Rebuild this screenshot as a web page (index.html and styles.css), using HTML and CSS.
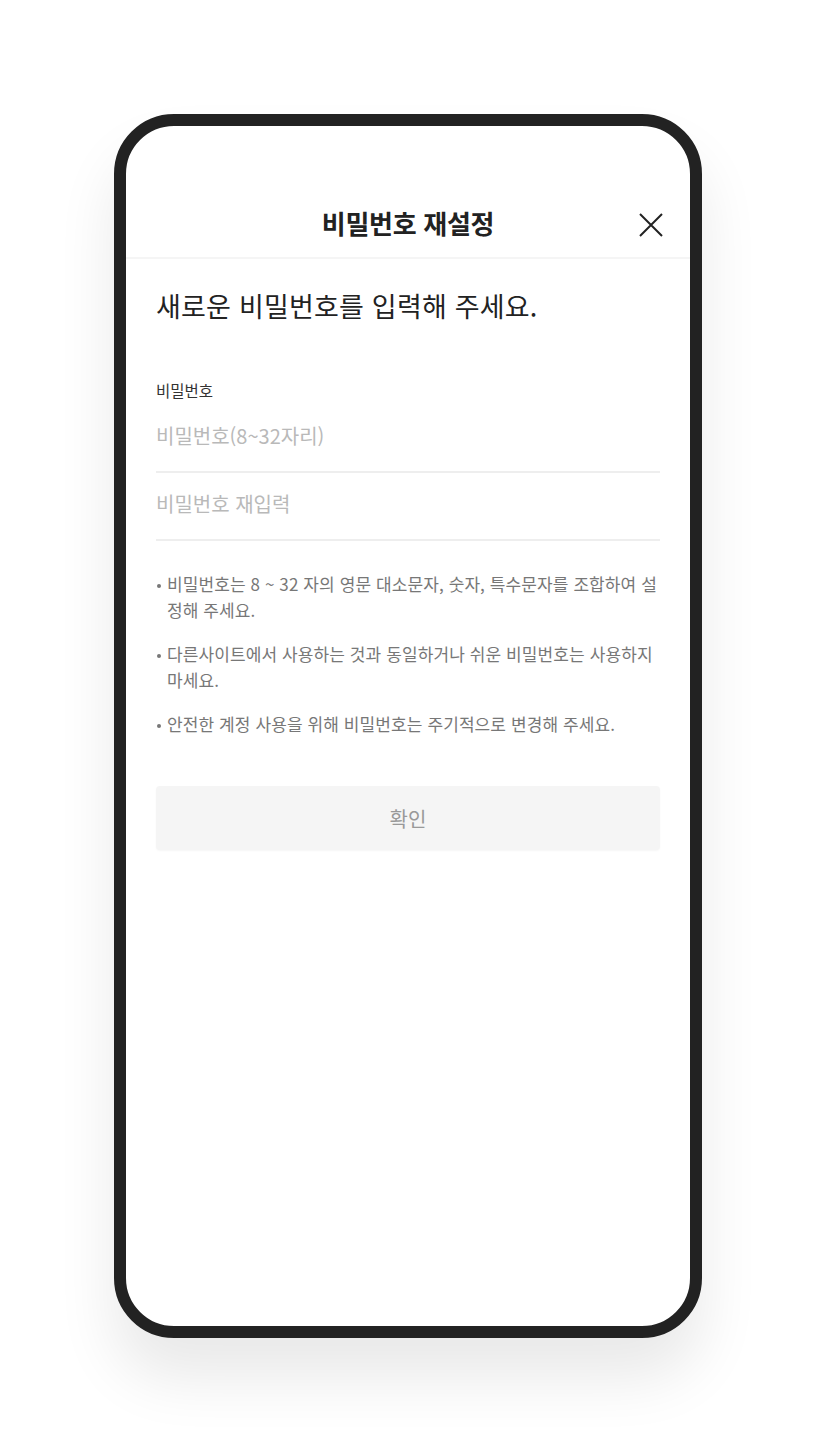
FILE: index.html
```html
<!DOCTYPE html>
<html lang="ko">
<head>
<meta charset="utf-8">
<title>비밀번호 재설정</title>
<link rel="stylesheet" href="styles.css">
</head>
<body>
<div class="stage">
  <div class="phone">
    <div class="screen">
      <header class="header">
        <h1 class="title">비밀번호 재설정</h1>
        <button class="close" aria-label="닫기">
          <svg width="24" height="24" viewBox="0 0 24 24"><path d="M1 1 L23 23 M23 1 L1 23" stroke="#222" stroke-width="2" fill="none"/></svg>
        </button>
      </header>
      <main class="content">
        <h2 class="heading">새로운 비밀번호를 입력해 주세요.</h2>
        <div class="label">비밀번호</div>
        <div class="field"><span class="placeholder">비밀번호(8~32자리)</span></div>
        <div class="field"><span class="placeholder">비밀번호 재입력</span></div>
        <ul class="notes">
          <li>비밀번호는 8 ~ 32 자의 영문 대소문자, 숫자, 특수문자를 조합하여 설정해 주세요.</li>
          <li>다른사이트에서 사용하는 것과 동일하거나 쉬운 비밀번호는 사용하지 마세요.</li>
          <li>안전한 계정 사용을 위해 비밀번호는 주기적으로 변경해 주세요.</li>
        </ul>
        <button class="confirm">확인</button>
      </main>
    </div>
  </div>
</div>
</body>
</html>
```
FILE: styles.css
```css
* { box-sizing: border-box; }
html, body { margin: 0; padding: 0; background: #fff; }
body { font-family: "Noto Sans CJK KR", "Noto Sans", sans-serif; }

.stage {
  display: flex;
  justify-content: center;
  padding-top: 114px;
  height: 1452px;
}

.phone {
  width: 588px;
  height: 1224px;
  border: 12px solid #222;
  border-radius: 60px;
  background: #fff;
  box-shadow: 0 40px 60px rgba(0, 0, 0, 0.09);
  overflow: hidden;
}

.screen { display: flex; flex-direction: column; height: 100%; }

.header {
  position: relative;
  margin-top: 67px;
  height: 66px;
  padding-bottom: 6px;
  display: flex;
  align-items: center;
  justify-content: center;
  border-bottom: 2px solid #f5f5f5;
}

.title {
  margin: 0;
  font-size: 26px;
  font-weight: 700;
  color: #222;
  letter-spacing: -0.3px;
}

.close {
  position: absolute;
  right: 27px;
  top: 20px;
  width: 24px;
  height: 24px;
  padding: 0;
  border: 0;
  background: none;
  display: block;
}
.close svg { display: block; }

.content { padding: 28px 30px 0; display: flex; flex-direction: column; }

.heading {
  margin: 0;
  font-size: 27px;
  line-height: 38px;
  font-weight: 400;
  color: #222;
  letter-spacing: 0.2px;
}

.label {
  margin-top: 55px;
  font-size: 15.5px;
  line-height: 20px;
  color: #333;
}

.field {
  height: 68px;
  padding-bottom: 6px;
  border-bottom: 2px solid #eee;
  display: flex;
  align-items: center;
}
.label + .field { margin-top: 5px; }

.placeholder {
  font-size: 20px;
  color: #b9b9b9;
}

.notes {
  list-style: none;
  margin: 30px 0 0;
  padding: 0;
}
.notes li {
  position: relative;
  padding-left: 11px;
  font-size: 17px;
  line-height: 26px;
  color: #777;
  letter-spacing: 0.1px;
  word-break: break-all;
}
.notes li + li { margin-top: 18px; }
.notes li::before {
  content: "";
  position: absolute;
  left: 1px;
  top: 13px;
  width: 4px;
  height: 4px;
  border-radius: 50%;
  background: #777;
}

.confirm {
  margin-top: 49px;
  height: 64px;
  width: 100%;
  border: 0;
  border-radius: 4px;
  background: #f5f5f5;
  box-shadow: 0 1px 2px rgba(0, 0, 0, 0.04);
  font-family: inherit;
  font-size: 20px;
  color: #999;
}
```
